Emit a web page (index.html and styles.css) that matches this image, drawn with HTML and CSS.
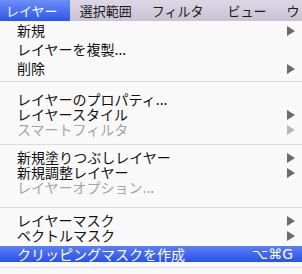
FILE: index.html
```html
<!DOCTYPE html>
<html lang="ja">
<head>
<meta charset="utf-8">
<link rel="stylesheet" href="styles.css">
</head>
<body>
<div class="screen">
  <div class="menubar">
    <span class="bar-item active first">レイヤー</span>
    <span class="bar-item">選択範囲</span>
    <span class="bar-item wide">フィルタ</span>
    <span class="bar-item">ビュー</span>
    <span class="bar-item">ウ</span>
  </div>
  <div class="menu">
    <div class="group g1">
      <div class="row r19"><span class="label">新規</span><svg class="arrow" width="8" height="10" viewBox="0 0 8 10"><polygon points="0,0 8,5 0,10"/></svg></div>
      <div class="row r19"><span class="label">レイヤーを複製...</span></div>
      <div class="row r19"><span class="label">削除</span><svg class="arrow" width="8" height="10" viewBox="0 0 8 10"><polygon points="0,0 8,5 0,10"/></svg></div>
    </div>
    <div class="sep"></div>
    <div class="group g2">
      <div class="row"><span class="label">レイヤーのプロパティ...</span></div>
      <div class="row"><span class="label">レイヤースタイル</span><svg class="arrow" width="8" height="10" viewBox="0 0 8 10"><polygon points="0,0 8,5 0,10"/></svg></div>
      <div class="row disabled"><span class="label">スマートフィルタ</span><svg class="arrow" width="8" height="10" viewBox="0 0 8 10"><polygon points="0,0 8,5 0,10"/></svg></div>
    </div>
    <div class="sep"></div>
    <div class="group g3">
      <div class="row"><span class="label">新規塗りつぶしレイヤー</span><svg class="arrow" width="8" height="10" viewBox="0 0 8 10"><polygon points="0,0 8,5 0,10"/></svg></div>
      <div class="row"><span class="label">新規調整レイヤー</span><svg class="arrow" width="8" height="10" viewBox="0 0 8 10"><polygon points="0,0 8,5 0,10"/></svg></div>
      <div class="row disabled"><span class="label">レイヤーオプション...</span></div>
    </div>
    <div class="sep"></div>
    <div class="group g4">
      <div class="row"><span class="label">レイヤーマスク</span><svg class="arrow" width="8" height="10" viewBox="0 0 8 10"><polygon points="0,0 8,5 0,10"/></svg></div>
      <div class="row"><span class="label">ベクトルマスク</span><svg class="arrow" width="8" height="10" viewBox="0 0 8 10"><polygon points="0,0 8,5 0,10"/></svg></div>
      <div class="row selected"><span class="label">クリッピングマスクを作成</span><span class="shortcut">⌥⌘G</span></div>
    </div>
    <div class="sep bottom"></div>
  </div>
</div>
</body>
</html>
```

FILE: styles.css
```css
html, body {
  margin: 0;
  padding: 0;
  background: #f9f9f9;
}

.screen {
  width: 302px;
  height: 274px;
  overflow: hidden;
  font-family: "Noto Sans CJK JP", "DejaVu Sans", sans-serif;
  color: #111;
}

.menubar {
  display: flex;
  height: 21px;
  background: linear-gradient(#ddd7e5, #c9c1d4);
  font-size: 13px;
  line-height: 21px;
  white-space: nowrap;
}

.bar-item {
  padding: 0 10px;
  color: #1a1a1a;
}

.bar-item.first {
  padding: 0 12px 0 6px;
}

.bar-item.wide {
  padding-right: 14px;
}

.bar-item.active {
  background: linear-gradient(#6c8ef7, #2d57ec);
  color: #fff;
}

.menu {
  background: #f9f9f9;
}

.group {
  display: flex;
  flex-direction: column;
}

.g1 { padding-bottom: 3px; }
.g2 { padding-top: 10px; padding-bottom: 7px; }
.g3 { padding-top: 5px; padding-bottom: 12px; }
.g4 { padding-top: 5px; padding-bottom: 5px; }

.row {
  display: flex;
  align-items: center;
  justify-content: space-between;
  height: 15px;
  padding: 0 7px 0 17px;
  font-size: 14px;
  line-height: 15px;
  white-space: nowrap;
}

.label {
  display: block;
  height: 15px;
  line-height: 15px;
}

.row.r19 {
  height: 19px;
}

.row.selected {
  height: 16px;
  margin-top: 3px;
  background: linear-gradient(#5b80f4, #2a50e8);
  color: #fff;
}

.row.disabled {
  color: #a4a4a4;
}

.arrow {
  fill: #6a6a6a;
  flex: none;
}

.row.disabled .arrow {
  fill: #b8b8b8;
}

.shortcut {
  font-family: "DejaVu Sans", sans-serif;
  font-size: 14px;
  line-height: 15px;
  color: #fff;
  padding-right: 2px;
}

.sep {
  height: 1px;
  background: #dcdcdc;
}

.sep.bottom {
  background: #e4e4e4;
}
```
